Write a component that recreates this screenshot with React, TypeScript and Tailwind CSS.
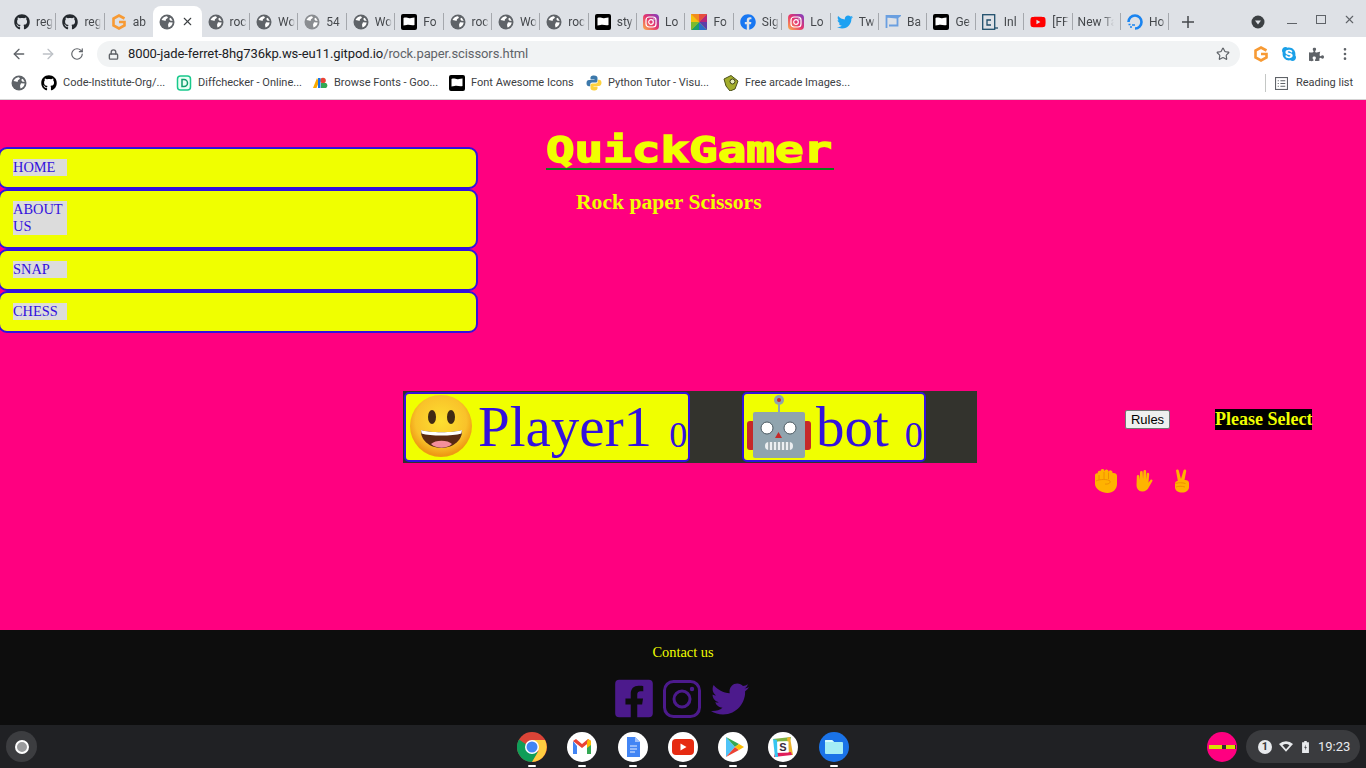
import { FaFacebookSquare, FaGithub, FaTwitter, FaFacebook, FaPuzzlePiece, FaSkype, FaYoutube } from 'react-icons/fa';
import { ArrowLeft, ArrowRight, Lock, MoreVertical, RotateCw, Star, X } from 'lucide-react';

function Globe({ gray = false }: { gray?: boolean }) {
  return (
    <svg viewBox="0 0 16 16" className="w-4 h-4 shrink-0">
      <circle cx="8" cy="8" r="7.5" fill={gray ? '#8a8d91' : '#5f6368'} />
      <path d="M2.500 6C3.500 3.800 5.800 2.300 8 2.300l1 1.500-2 1.500-.5 1.700-1.500-.6zM10 8.200l3.700.4c-.3 2.500-2 4.200-4.200 5l-.5-2.900zM11.800 3.700l1.900 3.200-2.600-.5-.9-1.600z" fill="#fff" />
    </svg>
  );
}

function GIcon() {
  return (
    <svg viewBox="0 0 16 16" className="w-4 h-4 shrink-0">
      <path d="M13.500 4.500L8 1.500 2.500 4.500v7L8 14.500l5.500-3V8H8" fill="none" stroke="#f79a34" strokeWidth="2.600" />
    </svg>
  );
}

function FlagIcon() {
  return (
    <svg viewBox="0 0 16 16" className="w-4 h-4 shrink-0">
      <rect width="16" height="16" rx="2" fill="#000" />
      <path d="M2.500 4c3-1.500 4.500 1 7.500 0l3.500-.5v7.500c-3 1-5-1-8 0l-3 .5z" fill="#fff" />
    </svg>
  );
}

function InstaIcon() {
  return (
    <svg viewBox="0 0 16 16" className="w-4 h-4 shrink-0">
      <defs>
        <linearGradient id="ig" x1="0" y1="1" x2="1" y2="0">
          <stop offset="0" stopColor="#fdb44b" />
          <stop offset="0.5" stopColor="#e5356f" />
          <stop offset="1" stopColor="#7a3fc4" />
        </linearGradient>
      </defs>
      <rect width="16" height="16" rx="4" fill="url(#ig)" />
      <rect x="3" y="3" width="10" height="10" rx="3" fill="none" stroke="#fff" strokeWidth="1.200" />
      <circle cx="8" cy="8" r="2.300" fill="none" stroke="#fff" strokeWidth="1.200" />
      <circle cx="11" cy="5" r=".7" fill="#fff" />
    </svg>
  );
}

function WheelIcon() {
  return (
    <svg viewBox="0 0 16 16" className="w-4 h-4 shrink-0">
      <rect width="16" height="16" fill="#f4c20d" />
      <path d="M8 8L0 0h8z" fill="#f28b1f" />
      <path d="M8 8L8 0h8z" fill="#e84d3d" />
      <path d="M8 8l8-8v8z" fill="#b5267a" />
      <path d="M8 8h8v8z" fill="#5b3fa8" />
      <path d="M8 8l8 8H8z" fill="#2a6fc9" />
      <path d="M8 8v8H0z" fill="#1e9e6a" />
      <path d="M8 8l-8 8V8z" fill="#7cbb2e" />
    </svg>
  );
}

function BookmarkIcon() {
  return (
    <svg viewBox="0 0 16 16" className="w-4 h-4 shrink-0">
      <path d="M1.500 14V2h13l-2 1.500v8h-8.500M1.500 3c3-1 6 1 11 .5" fill="none" stroke="#6a9fe0" strokeWidth="1.800" />
    </svg>
  );
}

function TerminalIcon() {
  return (
    <svg viewBox="0 0 16 16" className="w-4 h-4 shrink-0">
      <rect x=".7" y=".7" width="12" height="14.600" fill="none" stroke="#1f4e6b" strokeWidth="1.300" />
      <path d="M9 6H5v5h4" fill="none" stroke="#1f4e6b" strokeWidth="1.300" />
      <path d="M13 14h3" stroke="#1f4e6b" strokeWidth="1.300" />
    </svg>
  );
}

function RingIcon() {
  return (
    <svg viewBox="0 0 16 16" className="w-4 h-4 shrink-0">
      <path d="M8 14.500A6.500 6.500 0 1 0 1.500 8" fill="none" stroke="#1a84f0" strokeWidth="2.600" />
      <path d="M5 11h3M3 13h2M1.500 10.500h2" stroke="#1a84f0" strokeWidth="1.500" />
    </svg>
  );
}

function DiffIcon() {
  return (
    <svg viewBox="0 0 16 16" className="w-4 h-4 shrink-0">
      <rect x="1.500" y="1" width="13" height="14" rx="3" fill="#eafff5" stroke="#19c98c" strokeWidth="1.500" />
      <path d="M6 4.500h2a3.500 3.500 0 0 1 0 7H6z" fill="none" stroke="#0e9e6d" strokeWidth="1.500" />
    </svg>
  );
}

function FontsIcon() {
  return (
    <svg viewBox="0 0 16 16" className="w-4 h-4 shrink-0">
      <path d="M1 13L5 3l2 4-2.500 6z" fill="#f9ab00" />
      <circle cx="11" cy="5.500" r="2.800" fill="#ea4335" />
      <rect x="6" y="3" width="2.500" height="10" fill="#1a73e8" />
      <path d="M9 8h5a3 3 0 0 1 0 5H9z" fill="#34a853" />
    </svg>
  );
}

function PythonIcon() {
  return (
    <svg viewBox="0 0 16 16" className="w-4 h-4 shrink-0">
      <path d="M8 .5c-3 0-3.500 1.200-3.500 2.500v1.500H8.500V5H3C1.500 5 .5 6.200.5 8.200c0 2 1 3 2.500 3h1.200V9.500C4.200 8.300 5 7.500 6.200 7.500h3.500c1 0 1.800-.8 1.800-1.800V3C11.500 1.500 10.500.5 8 .5z" fill="#3c78aa" />
      <path d="M8 15.500c3 0 3.500-1.200 3.500-2.500v-1.500H7.500V11H13c1.500 0 2.500-1.200 2.500-3.200 0-2-1-3-2.500-3h-1.200v1.700c0 1.200-.8 2-2 2H6.300c-1 0-1.800.8-1.800 1.800V13c0 1.500 1 2.500 3.500 2.500z" fill="#fdd23e" />
    </svg>
  );
}

function ArcadeIcon() {
  return (
    <svg viewBox="0 0 16 16" className="w-4 h-4 shrink-0">
      <path d="M1 4l7-3.500 7 5.500-3 8-5 2-4-5z" fill="#a3ad2b" stroke="#4b4f18" strokeWidth="1" />
      <circle cx="9.500" cy="6.500" r="2.500" fill="#e7ecc0" stroke="#3d4015" strokeWidth="1" />
    </svg>
  );
}

type TabData = { icon: React.ReactNode; label: string };

const tabs: TabData[] = [
  { icon: <FaGithub className="w-4 h-4 shrink-0 text-[#24292e]" />, label: 'reg' },
  { icon: <FaGithub className="w-4 h-4 shrink-0 text-[#24292e]" />, label: 'reg' },
  { icon: <GIcon />, label: 'ab' },
  { icon: <Globe />, label: '' },
  { icon: <Globe />, label: 'roc' },
  { icon: <Globe />, label: 'Wo' },
  { icon: <Globe gray />, label: '54' },
  { icon: <Globe />, label: 'Wo' },
  { icon: <FlagIcon />, label: 'Fo' },
  { icon: <Globe />, label: 'roc' },
  { icon: <Globe />, label: 'Wo' },
  { icon: <Globe />, label: 'roc' },
  { icon: <FlagIcon />, label: 'sty' },
  { icon: <InstaIcon />, label: 'Lo' },
  { icon: <WheelIcon />, label: 'Fo' },
  { icon: <FaFacebook className="w-4 h-4 shrink-0 text-[#1877f2]" />, label: 'Sig' },
  { icon: <InstaIcon />, label: 'Lo' },
  { icon: <FaTwitter className="w-4 h-4 shrink-0 text-[#1da1f2]" />, label: 'Tw' },
  { icon: <BookmarkIcon />, label: 'Ba' },
  { icon: <FlagIcon />, label: 'Ge' },
  { icon: <TerminalIcon />, label: 'Inl' },
  { icon: <FaYoutube className="w-4 h-4 shrink-0 text-[#f00]" />, label: '[FF' },
  { icon: null, label: 'New Ta' },
  { icon: <RingIcon />, label: 'Ho' },
];

function TabStrip() {
  return (
    <div className="h-[37px] bg-[#dee1e6] flex items-end pl-[8px] shrink-0">
      {tabs.map((tab, i) => {
        const active = i === 3;
        return (
          <div
            key={i}
            className={`w-[48.4px] h-[31px] flex items-center shrink-0 relative ${active ? 'bg-white rounded-t-lg' : ''} ${tab.icon ? 'pl-[6px]' : 'pl-[5px]'}`}
          >
            {tab.icon}
            {active ? (
              <X className="w-[13px] h-[13px] ml-[6px] text-[#3c4043]" strokeWidth={2} />
            ) : (
              <span className={`${tab.icon ? 'ml-[6px] w-[17px]' : 'w-[36px]'} text-[12px] text-[#45484c] overflow-hidden whitespace-nowrap [mask-image:linear-gradient(to_right,black_70%,transparent)]`}>{tab.label}</span>
            )}
            {!active && i !== 2 ? <div className="absolute right-0 top-[7px] w-px h-[17px] bg-[#a5a8ad]" /> : null}
          </div>
        );
      })}
      <div className="w-[37px] h-[31px] flex items-center justify-center shrink-0">
        <svg viewBox="0 0 12 12" className="w-[12px] h-[12px]">
          <path d="M6 0v12M0 6h12" stroke="#45484c" strokeWidth="1.500" />
        </svg>
      </div>
      <div className="h-[31px] flex items-center ml-[45px]">
        <svg viewBox="0 0 14 14" className="w-[14px] h-[14px]">
          <circle cx="7" cy="7" r="6.500" fill="#3c4043" />
          <path d="M4 5.500h6L7 9.500z" fill="#dee1e6" />
        </svg>
        <div className="w-[10px] h-px bg-[#5f6368] ml-[22px] mt-[3px]" />
        <div className="w-[10px] h-[9px] border-[1.500px] border-[#5f6368] ml-[19px] -mt-[4px]" />
        <X className="w-[13px] h-[13px] ml-[17px] -mt-[4px] text-[#5f6368]" strokeWidth={2} />
      </div>
    </div>
  );
}

function Toolbar() {
  return (
    <div className="h-[30px] pt-[4px] bg-white flex items-center shrink-0">
      <ArrowLeft className="w-[16px] h-[16px] ml-[11px] text-[#5f6368]" strokeWidth={2} />
      <ArrowRight className="w-[16px] h-[16px] ml-[13px] text-[#bdc1c6]" strokeWidth={2} />
      <RotateCw className="w-[14px] h-[14px] ml-[14px] text-[#5f6368]" strokeWidth={2} />
      <div className="ml-[13px] w-[1143px] h-[26px] rounded-full bg-[#f1f3f4] flex items-center">
        <Lock className="w-[11px] h-[11px] ml-[11px] text-[#5f6368]" strokeWidth={3} />
        <span className="ml-[9px] text-[13px] tracking-[-0.1px] text-[#202124] whitespace-nowrap">
          8000-jade-ferret-8hg736kp.ws-eu11.gitpod.io<span className="text-[#5f6368]">/rock.paper.scissors.html</span>
        </span>
        <Star className="w-[14px] h-[14px] ml-auto mr-[10px] text-[#5f6368]" strokeWidth={2} />
      </div>
      <div className="ml-[13px]"><GIcon /></div>
      <FaSkype className="w-[16px] h-[16px] ml-[12px] text-[#1aa0e8]" />
      <FaPuzzlePiece className="w-[15px] h-[15px] ml-[12px] text-[#5f6368]" />
      <MoreVertical className="w-[16px] h-[16px] ml-[13px] text-[#5f6368]" strokeWidth={2} />
    </div>
  );
}

function Bookmark({ icon, label, width, gap }: { icon: React.ReactNode; label: string; width: string; gap: string }) {
  return (
    <div className={`flex items-center ${gap}`}>
      {icon}
      <span className={`ml-[6px] text-[11px] text-[#3c4043] whitespace-nowrap ${width}`}>{label}</span>
    </div>
  );
}

function BookmarksBar() {
  return (
    <div className="h-[33px] bg-white border-b border-[#d3d3d3] flex items-center pl-[11px] shrink-0">
      <Globe />
      <Bookmark icon={<FaGithub className="w-4 h-4 text-black" />} label="Code-Institute-Org/..." width="w-[100px]" gap="ml-[14px]" />
      <Bookmark icon={<DiffIcon />} label="Diffchecker - Online..." width="w-[102px]" gap="ml-[13px]" />
      <Bookmark icon={<FontsIcon />} label="Browse Fonts - Goo..." width="w-[102px]" gap="ml-[12px]" />
      <Bookmark icon={<FlagIcon />} label="Font Awesome Icons" width="w-[102px]" gap="ml-[13px]" />
      <Bookmark icon={<PythonIcon />} label="Python Tutor - Visu..." width="w-[102px]" gap="ml-[13px]" />
      <Bookmark icon={<ArcadeIcon />} label="Free arcade Images..." width="w-[102px]" gap="ml-[13px]" />
      <div className="ml-[418px] w-px h-[18px] bg-[#c4c7c5]" />
      <svg viewBox="0 0 12 12" className="w-[13px] h-[13px] ml-[9px]">
        <rect x=".5" y=".5" width="11" height="11" fill="none" stroke="#5f6368" />
        <path d="M2.500 3.500h1M5 3.500h4.500M2.500 6h1M5 6h4.500M2.500 8.500h1M5 8.500h4.500" stroke="#5f6368" />
      </svg>
      <span className="ml-[8px] text-[11px] text-[#3c4043] whitespace-nowrap">Reading list</span>
    </div>
  );
}

function NavItem({ label, extra = '' }: { label: string; extra?: string }) {
  return (
    <li className={`border-2 border-[#3311dd] rounded-[9px] bg-[#f0ff00] pl-[13px] pt-[10px] pb-[11px] ${extra}`}>
      <a className="block w-[54px] bg-[#dcdcdc] text-[#3311dd] text-[14.400px] leading-[17px]">{label}</a>
    </li>
  );
}

function Smiley() {
  return (
    <svg viewBox="0 0 66 66" className="w-[66px] h-[66px] shrink-0">
      <defs>
        <radialGradient id="face" cx="50%" cy="42%" r="55%">
          <stop offset="0" stopColor="#fde030" />
          <stop offset="0.75" stopColor="#f9c22a" />
          <stop offset="1" stopColor="#ee9a14" />
        </radialGradient>
      </defs>
      <circle cx="33" cy="32" r="31" fill="url(#face)" />
      <ellipse cx="24" cy="23" rx="4" ry="7" fill="#402a14" />
      <ellipse cx="43" cy="23" rx="4" ry="7" fill="#402a14" />
      <path d="M13 36c8 3 33 3 41 0 1 9-8 18-20.500 18S12 45 13 36z" fill="#5a2a12" />
      <path d="M13 36c8 3 33 3 41 0l-.6 3.500c-9 2.700-31 2.700-39.800 0z" fill="#fff" />
      <path d="M23 50c4-4.500 17-4.500 21 0-5.500 5-15.500 5-21 0z" fill="#f48f9b" />
    </svg>
  );
}

function Robot() {
  return (
    <svg viewBox="0 0 66 66" className="w-[66px] h-[66px] shrink-0">
      <path d="M33 6v13" stroke="#90a4ae" strokeWidth="2" />
      <circle cx="33" cy="6" r="5" fill="#90a4ae" />
      <circle cx="33" cy="6" r="2" fill="#c62828" />
      <rect x="1" y="27" width="8" height="29" rx="3" fill="#c62828" />
      <rect x="57" y="27" width="8" height="29" rx="3" fill="#c62828" />
      <rect x="7" y="18" width="52" height="46" rx="2" fill="#90a4ae" />
      <circle cx="21" cy="34" r="6" fill="#fff" stroke="#4b5a62" />
      <circle cx="44" cy="34" r="6" fill="#fff" stroke="#4b5a62" />
      <path d="M32.500 38l3.500 6h-7z" fill="#c62828" />
      <rect x="19" y="48" width="28" height="8" rx="4" fill="#eceff1" />
      <path d="M23 48v8M27 48v8M31 48v8M35 48v8M39 48v8M43 48v8" stroke="#78868d" strokeWidth="1.200" />
    </svg>
  );
}

function Fist() {
  return (
    <svg viewBox="0 0 24 24" className="w-[24px] h-[24px] shrink-0">
      <path d="M1 6.500a2 2 0 0 1 4-.5 2 2 0 0 1 1.500-4 2 2 0 0 1 4 .2 2 2 0 0 1 4 .6 2 2 0 0 1 4 1.200c2.500-.5 4.500.8 4.500 3V15c0 5-4 9-9.500 9S1 20 1 15z" fill="#ffb300" />
      <path d="M5 6v5M10 3v7M14.500 3.500v6.500M2 12c4-2 12-2 14 0 1 2-2 3.500-5 3" fill="none" stroke="#f09000" strokeWidth="1" />
    </svg>
  );
}

function Palm() {
  return (
    <svg viewBox="0 0 22 24" className="w-[21px] h-[24px] shrink-0">
      <path d="M4 7a1.300 1.300 0 0 1 2.600 0l.4 4 .4-8a1.400 1.400 0 0 1 2.800 0l.3 7 .5-8a1.400 1.400 0 0 1 2.800 0l-.2 8.500.8-6a1.300 1.300 0 0 1 2.600.3l-.8 9 2-2.800c1.200-1.300 2.900 0 2 1.300l-3.500 6c-1.500 3-3.500 4.700-7 4.700-4 0-6-3-6-7z" fill="#ffb300" />
    </svg>
  );
}

function Victory() {
  return (
    <svg viewBox="0 0 20 24" className="w-[20px] h-[24px] shrink-0">
      <path d="M4 1.500c.5-1.500 2.700-1 2.900.4L9 10l2.500-8.500c.5-1.500 3-1 2.700.7L12.500 11c2.300-.3 4.500 1 4.500 3v4c0 3.500-3 5.500-7 5.500-3.500 0-7-2-7-5v-4c0-1.300 1-2.300 2.800-2.800z" fill="#ffb300" />
      <path d="M3.500 14.500c3-1 7-1 10 0M4 18c2-1 6-1 9 0" fill="none" stroke="#f09000" strokeWidth="1" />
    </svg>
  );
}

function GamePage() {
  return (
    <main className="h-[530px] bg-[#ff0080] shrink-0 font-['Liberation_Serif',serif] overflow-hidden">
      <div className="h-[291px] flex">
        <ul className="w-[480px] -ml-[2px] pt-[47px] shrink-0">
          <NavItem label="HOME" />
          <NavItem label="ABOUT US" extra="pb-[12px]" />
          <NavItem label="SNAP" />
          <NavItem label="CHESS" />
        </ul>
        <div className="ml-[68px] w-[288px] pt-[27px]">
          <h1 className="h-[43px] border-b-2 border-[#0f7a1a] text-[#f0ff00] font-['DejaVu_Sans_Mono',monospace] font-bold text-[36px] leading-[45px] whitespace-nowrap [-webkit-text-stroke:1.500px_#f0ff00]">
            <span className="inline-block origin-left scale-x-[1.32]">QuickGamer</span>
          </h1>
          <h2 className="mt-[20px] ml-[30px] text-[#f0ff00] text-[21.600px] leading-[25px] font-bold whitespace-nowrap">Rock paper Scissors</h2>
        </div>
      </div>
      <div className="flex">
        <div className="ml-[403px] w-[574px] h-[72px] bg-[#33332d] flex py-px pl-px shrink-0 text-[#3311dd]">
          <div className="w-[286px] border-2 border-[#3311dd] rounded-[5px] bg-[#f0ff00] flex items-center pl-[2px] whitespace-nowrap">
            <Smiley />
            <span className="ml-[4px] text-[57px] leading-[70px]">Player1</span>
            <span className="ml-[17px] text-[36px] leading-[70px] mt-[15px]">0</span>
          </div>
          <div className="ml-[52px] w-[184px] border-2 border-[#3311dd] rounded-[5px] bg-[#f0ff00] flex items-center pl-[2px] whitespace-nowrap">
            <Robot />
            <span className="ml-[4px] text-[57px] leading-[70px]">bot</span>
            <span className="ml-[16px] text-[36px] leading-[70px] mt-[15px]">0</span>
          </div>
        </div>
        <div className="flex flex-col">
          <div className="flex items-start">
            <button className="ml-[148px] mt-[19px] w-[45px] h-[19px] bg-[#efefef] border border-[#767676] rounded-[2px] text-[13px] leading-[15px] text-black font-['Liberation_Sans',sans-serif]">Rules</button>
            <span className="ml-[45px] mt-[18px] bg-black text-[#f0ff00] text-[18px] leading-[21px] font-bold whitespace-nowrap">Please Select</span>
          </div>
          <div className="flex ml-[117px] mt-[39px] gap-[15px]">
            <Fist />
            <Palm />
            <div className="ml-[3px]"><Victory /></div>
          </div>
        </div>
      </div>
    </main>
  );
}

function Footer() {
  return (
    <footer className="h-[95px] bg-[#0d0d0d] shrink-0 flex flex-col items-center font-['Liberation_Serif',serif]">
      <p className="mt-[14px] text-[14.400px] leading-[17px] text-[#f0ff00]">Contact us</p>
      <div className="mt-[16px] pr-[2px] flex items-center gap-[10px] text-[#4c1a8c]">
        <FaFacebookSquare className="w-[38px] h-[43px]" />
        <svg viewBox="0 0 38 38" className="w-[38px] h-[38px]" fill="none" stroke="currentColor" strokeWidth="3">
          <rect x="1.500" y="1.500" width="35" height="35" rx="9" />
          <circle cx="19" cy="19" r="8" />
          <circle cx="29" cy="9" r="2.200" fill="currentColor" stroke="none" />
        </svg>
        <FaTwitter className="w-[38px] h-[38px]" />
      </div>
    </footer>
  );
}

function ShelfApp({ children, mark = true }: { children: React.ReactNode; mark?: boolean }) {
  return (
    <div className="w-[30px] flex flex-col items-center relative">
      {children}
      {mark ? <div className="absolute top-[33px] w-[8px] h-[2px] bg-white rounded-full" /> : null}
    </div>
  );
}

function Shelf() {
  return (
    <div className="h-[43px] bg-[#202124] shrink-0 flex items-center relative font-['Roboto',sans-serif]">
      <div className="ml-[6px] w-[31px] h-[31px] rounded-full bg-[#3c3d40] flex items-center justify-center">
        <div className="w-[14px] h-[14px] rounded-full border-2 border-white bg-[#9a9b9d]" />
      </div>
      <div className="ml-[480px] flex gap-[20.300px]">
        <ShelfApp>
          <svg viewBox="0 0 30 30" className="w-[30px] h-[30px]">
            <circle cx="15" cy="15" r="15" fill="#db4437" />
            <path d="M15 15L2 22.500A15 15 0 0 0 15 30z" fill="#0f9d58" />
            <path d="M2 7.500A15 15 0 0 0 2 22.500L15 30l6-9.500z" fill="#0f9d58" />
            <path d="M15 8h13a15 15 0 0 1-13 22l6.500-11z" fill="#ffcd40" />
            <circle cx="15" cy="15" r="7" fill="#fff" />
            <circle cx="15" cy="15" r="5.500" fill="#4285f4" />
          </svg>
        </ShelfApp>
        <ShelfApp>
          <svg viewBox="0 0 30 30" className="w-[30px] h-[30px]">
            <circle cx="15" cy="15" r="15" fill="#fff" />
            <path d="M6 9v13h4V14z" fill="#4285f4" />
            <path d="M20 14v8h4V9z" fill="#34a853" />
            <path d="M6 9l9 7 9-7-3-2-6 5-6-5z" fill="#ea4335" />
            <path d="M21 7l3 2v4l-4 3v-6z" fill="#fbbc04" />
          </svg>
        </ShelfApp>
        <ShelfApp>
          <svg viewBox="0 0 30 30" className="w-[30px] h-[30px]">
            <circle cx="15" cy="15" r="15" fill="#fff" />
            <path d="M9 5h8l5 5v15H9z" fill="#4285f4" />
            <path d="M17 5l5 5h-5z" fill="#a1c2fa" />
            <path d="M12 14h7M12 17h7M12 20h5" stroke="#e8f0fe" strokeWidth="1.200" />
          </svg>
        </ShelfApp>
        <ShelfApp>
          <svg viewBox="0 0 30 30" className="w-[30px] h-[30px]">
            <circle cx="15" cy="15" r="15" fill="#fff" />
            <rect x="4" y="7" width="22" height="16" rx="4" fill="#e62b12" />
            <path d="M12.500 11.500l6 3.500-6 3.500z" fill="#fff" />
          </svg>
        </ShelfApp>
        <ShelfApp>
          <svg viewBox="0 0 30 30" className="w-[30px] h-[30px]">
            <circle cx="15" cy="15" r="15" fill="#fff" />
            <path d="M8 5l9 10-9 10z" fill="#4fc3f7" />
            <path d="M8 5l13 7-4 3z" fill="#34a853" />
            <path d="M8 25l13-7-4-3z" fill="#ea4335" />
            <path d="M21 12l5 3-5 3-4-3z" fill="#fbbc04" />
          </svg>
        </ShelfApp>
        <ShelfApp>
          <svg viewBox="0 0 30 30" className="w-[30px] h-[30px]">
            <circle cx="15" cy="15" r="15" fill="#fff" />
            <path d="M5 7l18-2-1 4-15 1z" fill="#7fb241" />
            <path d="M22 5l3 18-4 0-2-17z" fill="#ecb32e" />
            <path d="M6 25l18-2-1-3-16 1z" fill="#e01e5a" />
            <path d="M5 7l2 18 3 0-1-17z" fill="#36c5f0" />
            <rect x="9.500" y="9.500" width="11" height="11" fill="#fff" />
            <text x="15" y="19" textAnchor="middle" fontSize="11" fontWeight="700" fill="#3b2a3c" fontFamily="Liberation Sans">S</text>
          </svg>
        </ShelfApp>
        <ShelfApp>
          <svg viewBox="0 0 30 30" className="w-[30px] h-[30px]">
            <circle cx="15" cy="15" r="15" fill="#1a73e8" />
            <path d="M6 9a1 1 0 0 1 1-1h6l2 2h8a1 1 0 0 1 1 1v10a1 1 0 0 1-1 1H7a1 1 0 0 1-1-1z" fill="#a5eef5" />
            <path d="M6 9a1 1 0 0 1 1-1h6l2 2H6z" fill="#d6fbff" />
          </svg>
        </ShelfApp>
      </div>
      <div className="absolute left-[1207px] top-[7px] w-[30px] h-[30px] rounded-full bg-[#ff0080] flex items-center justify-center">
        <div className="w-[27px] h-[4px] bg-[#33332d] flex gap-[4px]">
          <div className="w-[13px] h-[4px] bg-[#d8e000]" />
          <div className="w-[9px] h-[4px] bg-[#d8e000]" />
        </div>
      </div>
      <div className="absolute left-[1246px] top-[5px] w-[114px] h-[33px] rounded-full bg-[#3a3b3e] flex items-center pl-[12px]">
        <div className="w-[14px] h-[14px] rounded-full bg-[#e8eaed] flex items-center justify-center text-[11px] leading-[14px] font-bold text-[#3a3b3e]">1</div>
        <svg viewBox="0 0 16 12" className="w-[14px] h-[11px] ml-[7px]">
          <path d="M0 3a12 12 0 0 1 16 0L8 12z" fill="#e8eaed" />
          <path d="M4 4.500a7 7 0 0 1 8 0L8 9z" fill="#3a3b3e" />
        </svg>
        <svg viewBox="0 0 8 14" className="w-[7px] h-[12px] ml-[9px]">
          <path d="M2.500 0h3v1.500H8V14H0V1.500h2.500z" fill="#e8eaed" />
          <path d="M4.500 4L2.500 8h1.500l-.5 3 2-4H4z" fill="#3a3b3e" />
        </svg>
        <span className="ml-[9px] text-[13px] text-[#e8eaed]">19:23</span>
      </div>
    </div>
  );
}

export default function App() {
  return (
    <div className="w-[1366px] h-[768px] overflow-hidden flex flex-col font-['Roboto',sans-serif]">
      <TabStrip />
      <Toolbar />
      <BookmarksBar />
      <GamePage />
      <Footer />
      <Shelf />
    </div>
  );
}
